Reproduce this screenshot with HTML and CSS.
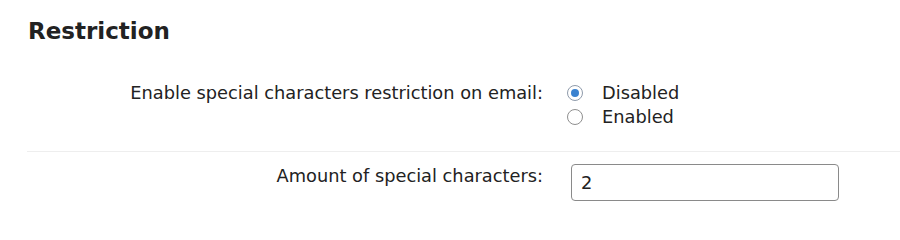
FILE: index.html
```html
<!DOCTYPE html>
<html>
<head>
<meta charset="utf-8">
<link rel="stylesheet" href="styles.css">
</head>
<body>
<div class="page">
  <h2 class="title">Restriction</h2>
  <div class="row row-radio">
    <div class="label">Enable special characters restriction on email:</div>
    <div class="control">
      <label class="opt"><span class="radio checked"></span><span>Disabled</span></label>
      <label class="opt"><span class="radio"></span><span>Enabled</span></label>
    </div>
  </div>
  <div class="row row-input">
    <div class="label">Amount of special characters:</div>
    <div class="control">
      <div class="input">2</div>
    </div>
  </div>
</div>
</body>
</html>
```

FILE: styles.css
```css
html, body {
  margin: 0;
  padding: 0;
  background: #fff;
}
body {
  font-family: "DejaVu Sans", Verdana, sans-serif;
  color: #222;
}
.page {
  padding: 0 0 0 27px;
}
.title {
  margin: 0;
  padding: 16px 0 0 1px;
  font-size: 23px;
  font-weight: bold;
  line-height: 30px;
  color: #222;
}
.row {
  display: grid;
  grid-template-columns: 516px 1fr;
  column-gap: 24px;
}
.row-radio {
  padding: 35px 0 22px;
  border-bottom: 1px solid #eee;
}
.row-input {
  padding: 12px 0 0;
}
.label {
  text-align: right;
  font-size: 17.8px;
  line-height: 24px;
}
.control {
  display: flex;
  flex-direction: column;
  align-items: flex-start;
}
.opt {
  display: flex;
  align-items: center;
  gap: 19px;
  font-size: 17.8px;
  line-height: 24px;
}
.radio {
  flex: none;
  display: block;
  width: 16px;
  height: 16px;
  border: 1px solid #8f8f8f;
  border-radius: 50%;
  box-sizing: border-box;
  position: relative;
  margin-top: -1px;
  background: #fff;
}
.radio.checked {
  border-color: #8f9bab;
}
.radio.checked::after {
  content: "";
  position: absolute;
  left: 3px;
  top: 3px;
  width: 8px;
  height: 8px;
  border-radius: 50%;
  background: #3a82d0;
}
.input {
  width: 268px;
  height: 37px;
  box-sizing: border-box;
  border: 1px solid #8a8a8a;
  border-radius: 4px;
  padding: 0 9px;
  font-size: 17.8px;
  line-height: 35px;
  margin-left: 4px;
}
```
